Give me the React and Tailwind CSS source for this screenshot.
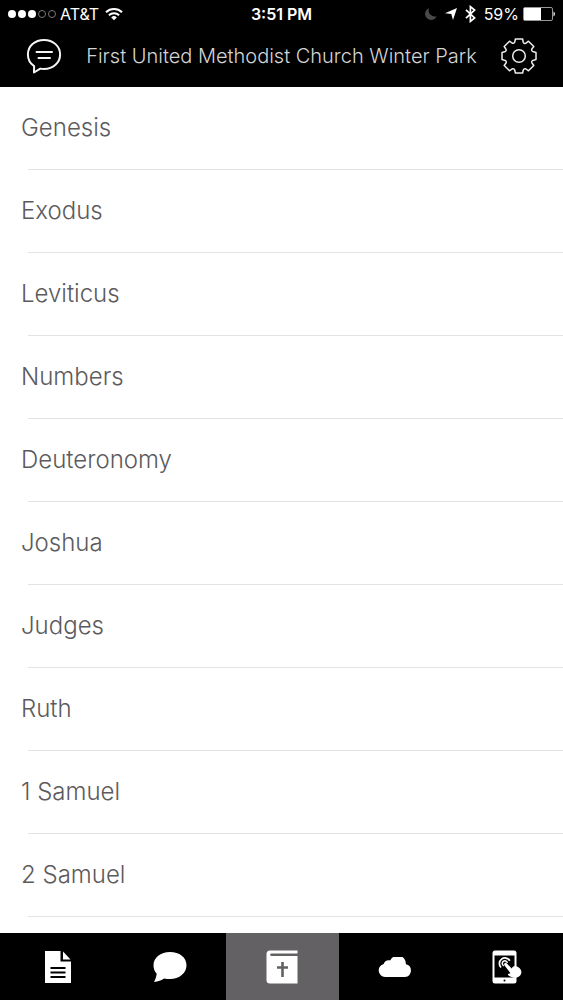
import { useState } from 'react'
import clsx from 'clsx'

const BOOKS = [
  'Genesis',
  'Exodus',
  'Leviticus',
  'Numbers',
  'Deuteronomy',
  'Joshua',
  'Judges',
  'Ruth',
  '1 Samuel',
  '2 Samuel',
]

function WifiIcon() {
  return (
    <svg width="18" height="14" viewBox="0 0 18 14" fill="none" stroke="#fff" strokeWidth="2">
      <path d="M1 5.2a11.6 11.6 0 0 1 16 0" />
      <path d="M3.9 8.3a7.4 7.4 0 0 1 10.2 0" />
      <path d="M9 13.2 6.2 10.4a4 4 0 0 1 5.6 0Z" fill="#fff" stroke="none" />
    </svg>
  )
}

function MoonIcon() {
  return (
    <svg width="12" height="12" viewBox="0 0 12 12" fill="#4a4a4a">
      <path d="M4 .3a6 6 0 1 0 7.6 8A6.2 6.2 0 0 1 4 .3Z" />
    </svg>
  )
}

function LocationIcon() {
  return (
    <svg width="12" height="12" viewBox="0 0 12 12" fill="#fff">
      <path d="M12 0 8 12 6.3 5.900 0 5.200Z" />
    </svg>
  )
}

function BluetoothIcon() {
  return (
    <svg width="11" height="18" viewBox="0 0 11 18" fill="none" stroke="#fff" strokeWidth="1.7">
      <path d="m1 4.800 8.600 8.200-4.200 3.400V1.600l4.200 3.400L1 13.200" />
    </svg>
  )
}

function BatteryIcon() {
  return (
    <svg width="32" height="14" viewBox="0 0 32 14">
      <rect x=".5" y=".5" width="29" height="13" rx="1.5" fill="none" stroke="#999" />
      <path d="M1 1h17v12H1z" fill="#fff" />
      <path d="M30.500 4.500c1.800.8 1.800 4.200 0 5Z" fill="#fff" />
    </svg>
  )
}

function MessagesIcon() {
  return (
    <svg width="36" height="36" viewBox="0 0 36 36" fill="none" stroke="#f5f5f5" strokeWidth="2" strokeLinecap="round" strokeLinejoin="round">
      <path d="M18 1.900C8.800 1.900 1.900 8.200 1.900 16.500c0 5 2.300 9 6.200 11.600L8 34.500l6.300-3.900c1.200.3 2.400.4 3.700.4 9.200 0 16.100-6.300 16.100-14.500S27.200 1.900 18 1.900Z" />
      <path d="M10.500 14h15.500M12.500 20h11.500" />
    </svg>
  )
}

function GearIcon() {
  return (
    <svg width="36" height="36" viewBox="-18 -18 36 36" fill="none" stroke="#ededed" strokeWidth="1.5" strokeLinejoin="round">
      <path d="M-3.600-17h7.200l.6 3.200q.4 1.200 1.500 1.200l1.300-.2 2.500-2 5.300 5.300-2 2.500q-.4 1 .2 1.900.6.800 1.500.9l2.500.6v7.200l-2.500.6q-1.200.2-1.600 1.100-.4.900.1 1.700l1.800 2.500-5.300 5.300-2.500-1.800q-.8-.5-1.700-.1-.9.4-1.100 1.600L3.600 17h-7.200l-.6-2.500q-.2-1.200-1.100-1.600-.9-.4-1.700.1l-2.500 1.800-5.300-5.300 1.800-2.500q.5-.8.1-1.700-.4-.9-1.600-1.100L-17 3.600v-7.200l2.500-.6q1.100-.2 1.500-1.100.4-.9-.2-1.700l-1.600-2.500 5.300-5.300 2.500 1.800q.9.500 1.800.1.800-.4 1-1.300Z" />
      <circle r="6.300" />
    </svg>
  )
}

function NotesIcon() {
  return (
    <svg width="26" height="32" viewBox="0 0 26 32">
      <path d="M0 0h15.500v10.500H26V32H0Z" fill="#fff" />
      <path d="M18 .5 25.500 8.500H18Z" fill="#fff" />
      <path d="M5.500 17h15M5.500 21.500h15M5.500 26h15" stroke="#000" strokeWidth="2" />
    </svg>
  )
}

function ChatIcon() {
  return (
    <svg width="34" height="32" viewBox="0 0 34 32" fill="#fff">
      <path d="M17 1C7.600 1 .5 6.700.5 14.200c0 3.600 1.200 6.300 3.200 8.500C3.400 25.500 2.400 28.300 1 31c4.200-.5 7.500-1.600 10.200-3.600 1.800.4 3.700.6 5.800.6 9.400 0 16.500-6 16.500-13.800S26.400 1 17 1Z" />
    </svg>
  )
}

function BibleIcon() {
  return (
    <svg width="32" height="34" viewBox="0 0 32 34">
      <path d="M4 .5h27.500V3.500H5.500a1.300 1.300 0 0 0 0 2.600h26v27.400H4A3.500 3.500 0 0 1 .5 30V4A3.500 3.500 0 0 1 4 .5Z" fill="#fff" />
      <path d="M16.500 12v15M11 17.500h11" stroke="#636163" strokeWidth="2.600" />
    </svg>
  )
}

function CloudIcon() {
  return (
    <svg width="34" height="20" viewBox="0 0 34 20" fill="#fff">
      <path d="M7 20a6.600 6.600 0 0 1-1.300-13C6.300 4.200 9.300 2.700 12.200 3.500a8.200 8.200 0 0 1 15.700 3.700A6.500 6.500 0 0 1 27 20Z" />
    </svg>
  )
}

function TabletTouchIcon() {
  return (
    <svg width="30" height="34" viewBox="0 0 30 34">
      <rect x=".5" y=".5" width="24" height="33" rx="2.500" fill="#fff" />
      <path d="M2.500 5.500h20v22h-20z" fill="#000" />
      <circle cx="12.500" cy="30.500" r="1" fill="#000" />
      <path d="M9 17.500a5.600 5.600 0 1 1 8.800-6.800" fill="none" stroke="#fff" strokeWidth="1.700" />
      <path d="M11.700 15.800a2.600 2.600 0 1 1 3.700-2.900" fill="none" stroke="#fff" strokeWidth="1.500" />
      <path d="M12.600 13.300c.8-.8 1.700-.5 2.300.2l4.800 4.900c1.200-1.900 3-2.700 4.800-2.100 2.700.8 4.900 3.200 4.900 6 0 2.500-1.800 4.700-4.700 5.300-2.500.4-4.800-.2-7.500-1.700-1.300-.7-1.900-1.700-.7-2.100l2-.6-6-7.800c-.5-.7-.5-1.500.1-2.100Z" fill="#fff" />
    </svg>
  )
}

const TABS = [
  { id: 'notes', label: 'Notes', Icon: NotesIcon },
  { id: 'chat', label: 'Chat', Icon: ChatIcon },
  { id: 'bible', label: 'Bible', Icon: BibleIcon },
  { id: 'cloud', label: 'Cloud', Icon: CloudIcon },
  { id: 'connect', label: 'Connect', Icon: TabletTouchIcon },
]

function StatusBar() {
  return (
    <div className="grid h-7 grid-cols-3 items-center px-2 text-base text-white">
      <div className="flex items-center gap-1">
        <span className="flex gap-0.5">
          {[1, 2, 3, 4, 5].map((n) => (
            <span
              key={n}
              className={clsx('size-2 rounded-full', n <= 3 ? 'bg-white' : 'border border-[#777]')}
            />
          ))}
        </span>
        <span>AT&amp;T</span>
        <span className="ml-0.5"><WifiIcon /></span>
      </div>
      <span className="text-center font-semibold">3:51 PM</span>
      <div className="flex items-center justify-end gap-2">
        <MoonIcon />
        <LocationIcon />
        <BluetoothIcon />
        <span className="flex items-center gap-1">
          59%
          <BatteryIcon />
        </span>
      </div>
    </div>
  )
}

export default function App() {
  const [activeTab, setActiveTab] = useState('bible')

  return (
    <div className="flex h-screen flex-col bg-white font-['Inter',sans-serif]">
      <header className="shrink-0 bg-black pb-3">
        <StatusBar />
        <div className="flex h-[47px] items-center justify-between px-[26px] pt-[9px]">
          <button type="button" aria-label="Messages"><MessagesIcon /></button>
          <h1 className="text-xl font-light whitespace-nowrap text-[#d4d4d4]">
            First United Methodist Church Winter Park
          </h1>
          <button type="button" aria-label="Settings"><GearIcon /></button>
        </div>
      </header>

      <main className="min-h-0 flex-1 overflow-y-auto [scrollbar-width:none]">
        <ul>
          {BOOKS.map((book) => (
            <li key={book}>
              <a href="#" className="block pl-[21px] text-2xl leading-[82px] font-light text-[#5c5a5c]">
                {book}
              </a>
              <div className="ml-7 h-px bg-[#e2e2e2]" />
            </li>
          ))}
        </ul>
      </main>

      <nav className="grid h-[67px] shrink-0 grid-cols-5 bg-black pl-0.5">
        {TABS.map(({ id, label, Icon }) => (
          <button
            key={id}
            type="button"
            aria-label={label}
            onClick={() => setActiveTab(id)}
            className={clsx('flex items-center justify-center', activeTab === id && 'bg-[#636163]')}
          >
            <Icon />
          </button>
        ))}
      </nav>
    </div>
  )
}
